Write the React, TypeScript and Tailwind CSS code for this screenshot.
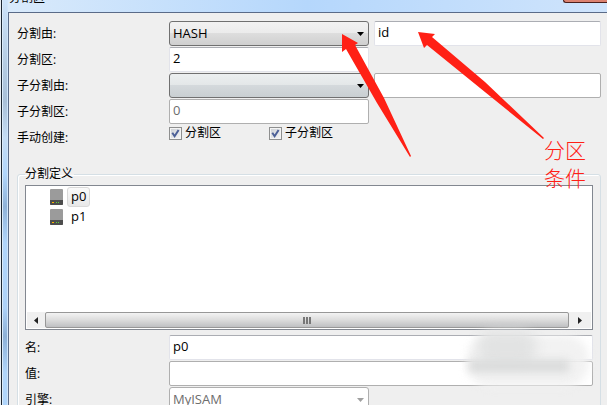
import { useState } from 'react';
import type { ReactNode } from 'react';
import { clsx } from 'clsx';

const PARTITIONS = ['p0', 'p1'];

const INPUT =
  'h-[25px] min-w-0 rounded-xs border border-[#e2e3ea] border-t-[#abadb3] bg-white px-[3px] pb-[3px] text-[13px] text-black outline-none disabled:border-[#afafaf] disabled:text-[#6d6d6d]';

interface RowProps {
  label: string;
  htmlFor: string;
  nested?: boolean;
  children: ReactNode;
}

function Row({ label, htmlFor, nested, children }: RowProps) {
  return (
    <div className="flex items-center">
      <label htmlFor={htmlFor} className={clsx('shrink-0', nested ? 'w-36' : 'w-38')}>
        {label}
      </label>
      {children}
    </div>
  );
}

interface ComboProps {
  id: string;
  options: string[];
  disabled?: boolean;
  className: string;
}

function Combo({ id, options, disabled, className }: ComboProps) {
  return (
    <div className="relative w-[200px] shrink-0">
      <select
        id={id}
        disabled={disabled}
        className={clsx(
          'block h-[25px] w-full appearance-none rounded-[3px] border px-[3px] pb-[2px] text-[13px] opacity-100 outline-none',
          className
        )}
      >
        {options.map((o) => (
          <option key={o}>{o}</option>
        ))}
      </select>
      <svg
        viewBox="0 0 7 4"
        className={clsx(
          'pointer-events-none absolute top-[11px] right-[5px] h-1 w-[7px]',
          disabled ? 'text-[#a0a0a0]' : 'text-black'
        )}
      >
        <path d="M0 0h7L3.5 4z" fill="currentColor" />
      </svg>
    </div>
  );
}

function Check({ id, label }: { id: string; label: string }) {
  const [on, setOn] = useState(true);
  return (
    <label htmlFor={id} className="flex w-[100px] items-center gap-[3px]">
      <span className="relative block size-[13px]">
        <input
          id={id}
          type="checkbox"
          checked={on}
          onChange={() => setOn(!on)}
          className="block size-[13px] appearance-none border border-[#8e8f8f] bg-linear-to-br from-[#cbcfd5] to-[#f6f6f6] shadow-[inset_0_0_0_1px_#f4f4f4]"
        />
        {on && (
          <svg viewBox="0 0 13 13" className="pointer-events-none absolute inset-0 size-[13px]" fill="none">
            <path d="M3.3 5.8 5.6 9.2 9.6 3" stroke="#4b5f97" strokeWidth="2" />
          </svg>
        )}
      </span>
      {label}
    </label>
  );
}

function DriveIcon() {
  return (
    <svg viewBox="0 0 13 16" className="h-4 w-[13px]">
      <rect width="13" height="16" rx="1" fill="#9b9b9b" />
      <path d="M0 11h13v4a1 1 0 0 1-1 1H1a1 1 0 0 1-1-1z" fill="#4d4d4d" />
      <path d="M2 13h2v1H2z" fill="#ffb400" />
      <path d="M6 13h1v1H6zM8 13h1v1H8z" fill="#5fd13c" />
    </svg>
  );
}

function ScrollBar() {
  return (
    <div className="flex h-4 bg-[#f0f0f0]">
      <button type="button" aria-label="向左滚动" className="flex w-[18px] items-center justify-center">
        <svg viewBox="0 0 4 7" className="h-[7px] w-1">
          <path d="M4 0v7L0 3.5z" fill="#222" />
        </svg>
      </button>
      <div className="flex flex-1 items-center justify-center rounded-xs border border-[#979797] bg-linear-to-b from-[#f3f3f3] via-[#dcdcdc] to-[#bfc0c2]">
        <svg viewBox="0 0 9 7" className="h-[7px] w-[9px]">
          <path d="M0 0h2v7H0zM3 0h2v7H3zM6 0h2v7H6z" fill="#777" />
        </svg>
      </div>
      <button type="button" aria-label="向右滚动" className="flex w-[22px] items-center justify-center">
        <svg viewBox="0 0 4 7" className="h-[7px] w-1">
          <path d="M0 0v7l4-3.5z" fill="#222" />
        </svg>
      </button>
    </div>
  );
}

export default function App() {
  const [selected, setSelected] = useState('p0');

  return (
    <div className="relative flex h-screen overflow-hidden bg-[#efefef] font-['Open_Sans','Noto_Sans_CJK_SC',sans-serif] text-[12px] leading-4 text-black">
      {/* Window edge */}
      <div className="w-px shrink-0 bg-[#e9eef4]" />
      <div className="w-[7px] shrink-0 border-l border-[#1c2733] bg-[linear-gradient(#cde3fa_0%,#b3cae1_17%,#a9c0d8_25%,#c4dcf4_34%,#b0d5fb_43%,#8fb2d8_51%,#b0d5fb_60%,#aed2f8_76%,#8db0d6_83%,#b0d5fb_92%)] shadow-[inset_1px_0_0_#dcecfb,inset_-1px_0_0_#cfe5fb]" />

      <div className="flex min-w-0 flex-1 flex-col">
        <header className="flex h-[13px] shrink-0 items-start justify-between overflow-hidden border-b border-[#5a6b88] bg-linear-to-r from-[#d9eafb] via-[#b5d7fc] to-[#cfe4fc]">
          <h1 className="-mt-2.5 pl-px">分割区</h1>
          <button
            type="button"
            aria-label="关闭"
            className="h-[3px] w-11 rounded-bl-sm border-b border-l border-[#4b1f1c] bg-[#dc8270]"
          />
        </header>

        <main className="flex-1 border-l border-[#5a6b88] pt-2 pr-1.5 pl-2">
          <div className="flex flex-col gap-px">
            <Row label="分割由:" htmlFor="by">
              <Combo
                id="by"
                options={['HASH', 'KEY', 'RANGE', 'LIST']}
                className="border-[#707070] bg-[linear-gradient(#f2f2f2,#ebebeb_50%,#dddddd_50%,#cfcfcf)]"
              />
              <input aria-label="分割表达式" defaultValue="id" className={clsx(INPUT, 'ml-[5px] flex-1')} />
            </Row>
            <Row label="分割区:" htmlFor="count">
              <input id="count" defaultValue="2" className={clsx(INPUT, 'w-[200px]')} />
            </Row>
            <Row label="子分割由:" htmlFor="sub-by">
              <Combo
                id="sub-by"
                options={['', 'HASH', 'KEY']}
                className="border-[#707070] bg-[linear-gradient(#eceff0,#e3e7e8_50%,#d4d9dc_50%,#c9cfd2)]"
              />
              <input aria-label="子分割表达式" disabled className={clsx(INPUT, 'ml-[5px] flex-1')} />
            </Row>
            <Row label="子分割区:" htmlFor="sub-count">
              <input id="sub-count" defaultValue="0" disabled className={clsx(INPUT, 'w-[200px]')} />
            </Row>
            <Row label="手动创建:" htmlFor="manual">
              <div className="flex h-[25px] items-start">
                <Check id="manual" label="分割区" />
                <Check id="manual-sub" label="子分割区" />
              </div>
            </Row>
          </div>

          <fieldset className="mt-4 h-64 min-w-0 rounded-[3px] border border-[#d5dfe5] px-[7px] shadow-[inset_1px_1px_0_#fff]">
            <legend className="pr-px">分割定义</legend>
            <div className="mt-[3px] flex h-[145px] flex-col border border-[#828790] bg-white p-px">
              <ul className="flex-1 pl-[23px]">
                {PARTITIONS.map((name) => (
                  <li key={name} className="flex h-5 items-center gap-1">
                    <DriveIcon />
                    <button
                      type="button"
                      onClick={() => setSelected(name)}
                      className={clsx(
                        'h-5 rounded-[3px] border px-[3px] pb-[2px] text-[13px]',
                        selected === name
                          ? 'border-[#d9d9d9] bg-linear-to-b from-[#fafafa] to-[#e8e8e8]'
                          : 'border-transparent'
                      )}
                    >
                      {name}
                    </button>
                  </li>
                ))}
              </ul>
              <ScrollBar />
            </div>

            <div className="relative mt-[5px] flex flex-col gap-px">
              <Row label="名:" htmlFor="name" nested>
                <input id="name" defaultValue="p0" className={clsx(INPUT, 'flex-1')} />
              </Row>
              <Row label="值:" htmlFor="value" nested>
                <input id="value" disabled className={clsx(INPUT, 'flex-1')} />
              </Row>
              <Row label="引擎:" htmlFor="engine" nested>
                <Combo
                  id="engine"
                  options={['MyISAM', 'InnoDB']}
                  disabled
                  className="border-[#afafaf] bg-white text-[#6d6d6d]"
                />
              </Row>
              {/* Smudge over the fields */}
              <div className="pointer-events-none absolute top-0 right-1 h-[52px] w-[122px] rounded-3xl bg-[#f1f1f1]/90 blur-[4px]" />
              <div className="pointer-events-none absolute -top-1 right-14 h-8 w-[60px] rounded-full bg-[#e2e3e3] blur-[6px]" />
              <div className="pointer-events-none absolute top-[25px] right-6 h-3 w-[100px] bg-[#d9dada] blur-[4px]" />
            </div>
          </fieldset>
        </main>
      </div>

      {/* Hand-drawn annotations */}
      <svg viewBox="0 0 270 140" className="pointer-events-none absolute top-[25px] left-[320px] h-[140px] w-[270px]">
        <path d="M22 9 38 18 35 20 64 73 91 131 90 132 57 78 26 24 22 27z" fill="#ff2015" />
        <path d="M98 7 115 9 112 12 165 57 224 113 223 114 160 63 107 20 104 23z" fill="#ff2015" />
      </svg>
      <p className="pointer-events-none absolute top-[136px] left-[544px] w-12 text-[21px] leading-7 font-light text-[#ff2015]">
        分区
        <br />
        条件
      </p>
    </div>
  );
}
